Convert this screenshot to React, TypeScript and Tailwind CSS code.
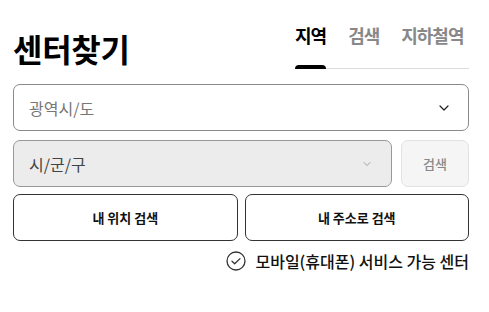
import { ChevronDown } from "lucide-react";

const TABS = [
  { label: "지역", active: true },
  { label: "검색", active: false },
  { label: "지하철역", active: false },
];

export default function App() {
  return (
    <div
      className="w-[489px] h-[312px] bg-white pl-[13px] pr-[20px] pt-[20px] text-[#111]"
      style={{ fontFamily: '"Noto Sans CJK KR", "Noto Sans", sans-serif' }}
    >
      {/* Header */}
      <div className="flex justify-between">
        <h1 className="mt-[10px] text-[32px] leading-[36px] font-bold tracking-[-0.3px] text-black">
          센터찾기
        </h1>
        <div className="w-[174px] mt-[4px] flex gap-[22px] border-b border-[#dcdcdc]">
          {TABS.map((t) => (
            <div
              key={t.label}
              className={`relative pb-[22px] text-[18px] leading-[22px] font-bold tracking-[-1px] ${
                t.active ? "text-black" : "text-[#888]"
              }`}
            >
              {t.label}
              {t.active && (
                <span className="absolute left-0 right-0 bottom-[-1px] h-[4px] rounded-t-[4px] bg-black" />
              )}
            </div>
          ))}
        </div>
      </div>

      {/* Region select */}
      <div className="mt-[15px] h-[47px] flex items-center justify-between rounded-[7px] border border-[#8a8a8a] pl-[15px] pr-[16px]">
        <span className="text-[16px] text-[#777]">광역시/도</span>
        <ChevronDown className="w-[16px] h-[16px] text-[#222]" strokeWidth={1.8} />
      </div>

      {/* District select + search */}
      <div className="mt-[9px] flex gap-[9px]">
        <div className="flex-1 h-[47px] flex items-center justify-between rounded-[7px] border border-[#999] bg-[#ececec] pl-[15px] pr-[18px]">
          <span className="text-[16px] text-[#444]">시/군/구</span>
          <ChevronDown className="w-[12px] h-[12px] text-[#999]" strokeWidth={1.8} />
        </div>
        <button className="w-[68px] h-[47px] rounded-[7px] border border-[#e2e2e2] bg-[#f5f5f5] text-[13px] font-medium text-[#888]">
          검색
        </button>
      </div>

      {/* Location buttons */}
      <div className="mt-[7px] flex gap-[7px]">
        <button className="flex-1 h-[47px] rounded-[7px] border border-[#333] bg-white text-[13px] font-bold text-[#111]">
          내 위치 검색
        </button>
        <button className="flex-1 h-[47px] rounded-[7px] border border-[#333] bg-white text-[13px] font-bold text-[#111]">
          내 주소로 검색
        </button>
      </div>

      {/* Mobile service check */}
      <div className="mt-[8px] flex items-center justify-end gap-[9px]">
        <svg width="20" height="20" viewBox="0 0 20 20" fill="none">
          <circle cx="10" cy="10" r="9" stroke="#333" strokeWidth="1.3" />
          <path d="M6 10.2l2.7 2.6L14 7.6" stroke="#333" strokeWidth="1.3" strokeLinecap="round" strokeLinejoin="round" />
        </svg>
        <span className="text-[16px] font-medium text-[#111]">모바일(휴대폰) 서비스 가능 센터</span>
      </div>
    </div>
  );
}
